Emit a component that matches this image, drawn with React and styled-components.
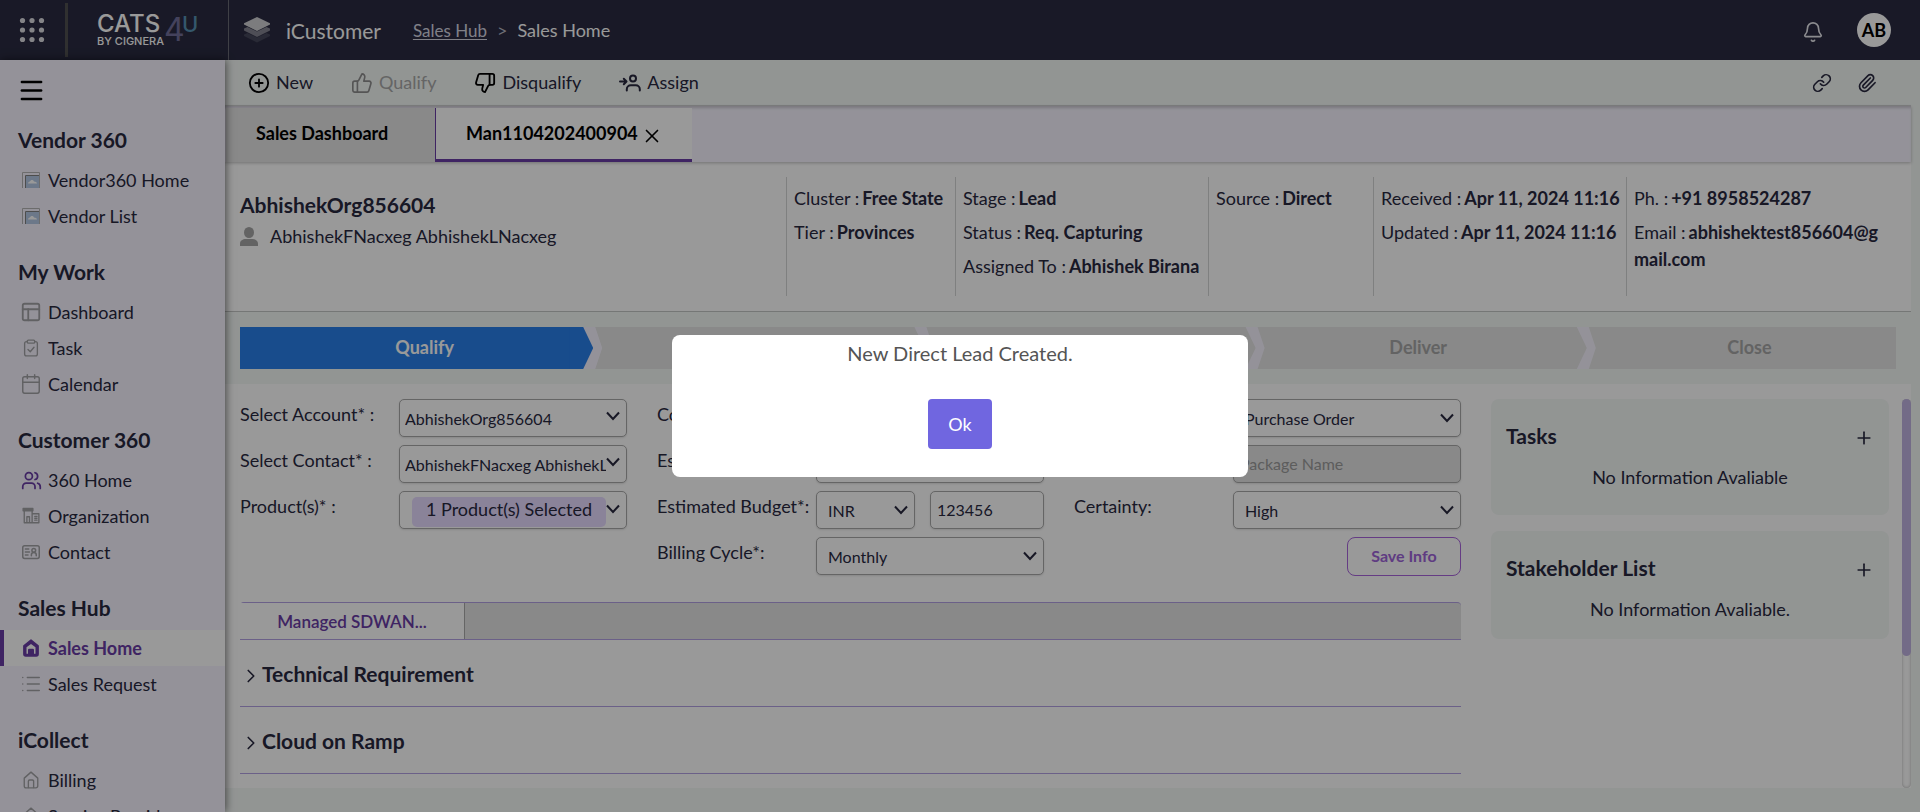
import React from "react";
import styled, { createGlobalStyle, css } from "styled-components";
import {
  Bell,
  Calendar,
  ChevronRight,
  CirclePlus,
  Link as LinkIcon,
  List,
  Menu,
  Paperclip,
  PanelsTopLeft,
  Plus,
  ThumbsDown,
  ThumbsUp,
  Users,
  X,
} from "lucide-react";

const color = {
  navy: "#2a2b41",
  ink: "#28283f",
  lilac: "#f7f4ff",
  mint: "#f4f8f6",
  grey: "#e4e4e4",
  greyText: "#a8a8a8",
  line: "#d4d6d6",
  field: "#a9a9a9",
  purple: "#693ca5",
  violetLine: "#b3a0e3",
  blue: "#287fe9",
};

const GlobalStyle = createGlobalStyle`
  *, *::before, *::after { box-sizing: border-box; }
  body {
    margin: 0;
    font-family: Lato, "Noto Sans", sans-serif;
    font-size: 18px;
    line-height: 27px;
    color: ${color.ink};
    background: ${color.mint};
  }
  button, input, select { font: inherit; color: inherit; }
  h2, h3, p, ul { margin: 0; padding: 0; }
  ul { list-style: none; }
`;

const Page = styled.div`
  display: flex;
  flex-direction: column;
  height: 100vh;
  overflow: hidden;
`;

const PlainButton = styled.button`
  display: inline-flex;
  align-items: center;
  border: 0;
  padding: 0;
  background: none;
  cursor: pointer;
`;

/* Top bar */

const TopBar = styled.header`
  display: flex;
  align-items: center;
  flex: none;
  height: 60px;
  color: #fff;
  background: ${color.navy};
`;

const AppsCell = styled.div`
  display: flex;
  align-items: center;
  width: 68px;
  height: 54px;
  padding-left: 18px;
  border-right: 3px solid #505050;
`;

const Brand = styled.a`
  display: flex;
  align-items: center;
  width: 161px;
  height: 60px;
  padding-left: 29px;
  border-right: 1px solid #6a6b76;
  color: #fff;
  text-decoration: none;
  font-family: Inter, "Liberation Sans", sans-serif;
`;

const BrandArt = styled.svg`
  display: block;
  fill: #fff;
`;

const AppTitle = styled.div`
  display: flex;
  align-items: center;
  gap: 15px;
  padding-left: 14px;
  font-size: 21px;
`;

const Crumbs = styled.nav`
  display: flex;
  gap: 10px;
  padding-left: 32px;

  a { font-size: 17px; color: #d6d6e2; text-underline-offset: 2px; }
`;

const CrumbMark = styled.span`
  color: #b8b8c4;
`;

const TopActions = styled.div`
  display: flex;
  align-items: center;
  gap: 33px;
  margin-left: auto;
  padding-right: 29px;
`;

const BellButton = styled(PlainButton)`
  padding-top: 4px;
`;

const Avatar = styled(PlainButton)`
  justify-content: center;
  width: 34px;
  height: 34px;
  border-radius: 50%;
  font-weight: 700;
  color: #000;
  background: #fff;
`;

/* Side navigation */

const Shell = styled.div`
  display: flex;
  flex: 1;
  min-height: 0;
`;

const Sidebar = styled.nav`
  flex: none;
  position: relative;
  z-index: 2;
  width: 225px;
  overflow: hidden;
  background: ${color.lilac};
  box-shadow: 1px 0 8px rgba(0, 0, 0, 0.55);
`;

const MenuButton = styled(PlainButton)`
  height: 58px;
  padding: 2px 17px 0;
  color: #000;
`;

const NavGroup = styled.section`
  margin-bottom: 16px;
`;

const NavHeading = styled.h2`
  padding-left: 18px;
  font-size: 21px;
  line-height: 44px;
  font-weight: 700;
`;

const NavLink = styled.a`
  display: flex;
  align-items: center;
  gap: 8px;
  height: 36px;
  padding-left: 22px;
  color: inherit;
  text-decoration: none;
  white-space: nowrap;

  ${({ $active }) => $active && css`
    padding-left: 18px;
    border-left: 4px solid ${color.purple};
    font-weight: 700;
    color: ${color.purple};
    background: #fff;
  `}
`;

const IconSlot = styled.span`
  display: flex;
  align-items: center;
  justify-content: center;
  flex: none;
  width: 18px;
  color: ${({ $tint }) => ($tint ? color.purple : "#a2a2a6")};

  svg { flex: none; }
`;

/* Main column */

const Main = styled.main`
  display: flex;
  flex: 1;
  flex-direction: column;
  min-width: 0;
  padding-right: 9px;
`;

const Toolbar = styled.div`
  display: flex;
  align-items: center;
  flex: none;
  gap: 38px;
  height: 46px;
  padding: 0 34px 0 23px;
  border-bottom: 1px solid ${color.line};
`;

const ToolButton = styled(PlainButton)`
  gap: 6px;
  ${({ disabled }) => disabled && css`color: ${color.greyText};`}
  svg { color: ${({ $iconColor }) => $iconColor || "#000"}; }
`;

const ToolLinks = styled.div`
  display: flex;
  gap: 25px;
  margin-left: auto;
`;

const TabBar = styled.div`
  position: relative;
  display: flex;
  flex: none;
  height: 56px;
  padding: 2px 0 0 1px;
  background: ${color.lilac};
  box-shadow: inset 0 3px 3px -1px rgba(0, 0, 0, 0.18), 0 1px 3px rgba(0, 0, 0, 0.25);
`;

const Tab = styled(PlainButton)`
  gap: 3px;
  min-width: 209px;
  padding: 0 30px 3px;
  font-weight: 700;
  color: #000;
  background: ${color.grey};

  svg { margin: 5px -3px 0 0; }

  ${({ $active }) => $active && css`
    min-width: 257px;
    padding-bottom: 0;
    border-left: 1px solid ${color.purple};
    border-bottom: 3px solid ${color.purple};
    background: #fff;
  `}
`;

const Summary = styled.section`
  display: grid;
  flex: none;
  grid-template-columns: 561fr 169fr 253fr 165fr 253fr 285fr;
  padding: 15px 0;
  height: 150px;
  border-bottom: 1px solid #c4c6c5;
  background: #fff;
`;

const Identity = styled.div`
  padding: 13px 15px;
`;

const OrgName = styled.h2`
  font-size: 21px;
  line-height: 30px;
  font-weight: 700;
`;

const Person = styled.p`
  display: flex;
  align-items: center;
  gap: 12px;
  line-height: 33px;
`;

const Facts = styled.ul`
  display: flex;
  flex-direction: column;
  gap: 7px;
  min-width: 0;
  padding: 8px ${({ $wide }) => ($wide ? "24px" : "0")} 0 7px;
  border-left: 1px solid ${color.line};
  white-space: ${({ $wide }) => ($wide ? "normal" : "nowrap")};
  word-break: ${({ $wide }) => ($wide ? "break-all" : "normal")};

  b { margin-left: 3px; font-weight: 700; }
`;

const StageBar = styled.ol`
  display: flex;
  flex: none;
  margin: 0;
  padding: 15px 15px;
  list-style: none;
`;

const Stage = styled.li`
  position: relative;
  z-index: ${({ $order }) => 10 - $order};
  flex: 1;
  height: 42px;
  padding-left: 38px;
  line-height: 40px;
  text-align: center;
  font-weight: 700;
  color: ${({ $current }) => ($current ? "#fff" : "#a6a6a6")};
  background: ${({ $current }) => ($current ? color.blue : color.grey)};

  &:not(:last-child)::before,
  &:not(:last-child)::after {
    content: "";
    position: absolute;
    top: 0;
    bottom: 0;
    left: calc(100% - 2px);
  }
  &::before {
    width: 33px;
    background: ${color.lilac};
    clip-path: polygon(8px 0, 26px 0, 100% 50%, 26px 100%, 8px 100%);
  }
  &::after {
    width: 24px;
    background: inherit;
    clip-path: polygon(0 0, 14px 0, 100% 50%, 14px 100%, 0 100%);
  }
`;

const Body = styled.div`
  display: flex;
  flex: 1;
  min-height: 0;
  margin-bottom: 24px;
  padding: 15px 0 0 15px;
  background: #fff;
`;

const Details = styled.div`
  flex: 1221;
  min-width: 0;
`;

const Aside = styled.aside`
  display: flex;
  flex: 398;
  flex-direction: column;
  gap: 16px;
  min-width: 0;
  margin: 0 13px 0 30px;
`;

const ScrollTrack = styled.div`
  width: 9px;
  flex: none;
  border-radius: 5px;
  box-shadow: inset 0 0 3px rgba(0, 0, 0, 0.3);
`;

const ScrollThumb = styled.div`
  height: 66%;
  border-radius: 5px;
  background: #c0b3e1;
`;

/* Form */

const Form = styled.form`
  display: grid;
  grid-template-columns: repeat(3, 1fr);
  gap: 30px;
  margin-bottom: 26px;
`;

const FormColumn = styled.div`
  display: flex;
  flex-direction: column;
  gap: 8px;
`;

const Field = styled.div`
  display: grid;
  grid-template-columns: 159fr 228fr;
  height: 38px;

  label { line-height: 30px; white-space: nowrap; }
`;

const Pair = styled.div`
  display: grid;
  grid-template-columns: 99fr 114fr;
  gap: 15px;
`;

const boxed = css`
  width: 100%;
  min-width: 0;
  height: 38px;
  border: 1px solid ${color.field};
  border-radius: 5px;
  background: #fff;
  font-size: 16px;
  box-shadow: 0 1px 2px rgba(0, 0, 0, 0.12);
`;

const SelectBox = styled.div`
  position: relative;
  min-width: 0;

  select {
    ${boxed}
    appearance: none;
    padding: 0 20px 0 ${({ $tight }) => ($tight ? "5px" : "11px")};
  }
  svg {
    position: absolute;
    top: ${({ $tight }) => ($tight ? "12px" : "14px")};
    right: 7px;
    pointer-events: none;
  }
`;

const TextBox = styled.input`
  ${boxed}
  padding: 0 6px 2px;
  &:disabled { background: ${color.grey}; }
  &::placeholder { color: #9b9b9b; }
`;

const ProductPicker = styled.button`
  ${boxed}
  position: relative;
  padding: 5px 20px 3px 12px;
  cursor: pointer;

  svg {
    position: absolute;
    top: 12px;
    right: 6px;
  }
`;

const Chip = styled.span`
  display: block;
  height: 30px;
  border-radius: 5px;
  font-size: 18px;
  line-height: 25px;
  white-space: nowrap;
  background: #e6daff;
`;

const SaveButton = styled.button`
  align-self: flex-end;
  width: 114px;
  height: 39px;
  padding: 0 0 3px;
  border: 1px solid #a864dc;
  border-radius: 8px;
  font-size: 16px;
  font-weight: 700;
  color: #9e64d9;
  background: #fff;
  cursor: pointer;
`;

const ProductTabs = styled.div`
  display: flex;
  height: 38px;
  border: solid ${color.violetLine};
  border-width: 1px 0;
  border-radius: 4px 4px 0 0;
  background: ${color.grey};
`;

const ProductTab = styled(PlainButton)`
  justify-content: center;
  width: 225px;
  border-right: 1px solid ${color.field};
  font-size: 17px;
  font-weight: 600;
  color: ${color.purple};
  background: #fff;
`;

const Accordion = styled(PlainButton)`
  display: flex;
  width: 100%;
  height: 67px;
  border-bottom: 1px solid ${color.violetLine};
  font-size: 21px;
  font-weight: 700;
  svg { margin-top: 6px; }
`;

/* Side cards */

const Card = styled.section`
  padding: 21px 15px ${({ $short }) => ($short ? "16px" : "24px")};
  border-radius: 8px;
  background: ${color.mint};
  text-align: center;
`;

const CardHead = styled.div`
  display: flex;
  align-items: center;
  justify-content: space-between;
  height: 30px;
  margin-bottom: 14px;

  h3 { font-size: 21px; font-weight: 700; }
  button { padding-top: 6px; }
`;

/* Dialog */

const Overlay = styled.div`
  position: fixed;
  inset: 0;
  z-index: 20;
  display: flex;
  align-items: center;
  justify-content: center;
  background: rgba(0, 0, 0, 0.4);
`;

const Dialog = styled.div`
  display: flex;
  flex-direction: column;
  align-items: center;
  width: 30%;
  padding: 3px 0 28px;
  border-radius: 8px;
  font-size: 20px;
  line-height: 30px;
  color: #545454;
  background: #fff;
`;

const OkButton = styled.button`
  width: 64px;
  height: 50px;
  margin-top: 31px;
  border: 0;
  border-radius: 4px;
  font-size: 18px;
  color: #fff;
  background: #7066e0;
  cursor: pointer;
`;

/* Icons */

const Stroke = ({ size = 18, width = 2, children }) => (
  <svg width={size} height={size} viewBox="0 0 24 24" fill="none" stroke="currentColor"
    strokeWidth={width} strokeLinecap="round" strokeLinejoin="round" aria-hidden="true">
    {children}
  </svg>
);

const DropMark = () => (
  <svg width="14" height="10" viewBox="0 0 14 10" fill="none" stroke={color.ink} strokeWidth="2" aria-hidden="true">
    <path d="M1 1.500 7 8l6-6.500" />
  </svg>
);

const DotsIcon = () => (
  <svg width="28" height="28" viewBox="0 0 28 28" fill="#dcdce2" aria-hidden="true">
    {[4.5, 14, 23.5].map((cy) => [4.5, 14, 23.5].map((cx) => <circle key={cx + "-" + cy} cx={cx} cy={cy} r="2.6" />))}
  </svg>
);

const StackIcon = () => (
  <svg width="28" height="28" viewBox="0 0 28 28" aria-hidden="true">
    <path d="M1 18.500 4.500 17 14 21.500 23.500 17 27 18.500V20L14 26.500 1 20Z" fill="#45465a" />
    <path d="M1 12.500 4.500 11 14 15.500 23.500 11 27 12.500V14.500L14 21 1 14.500Z" fill="#83838f" />
    <path d="M14 1 27 7.200V8.500L14 15 1 8.500V7.200Z" fill="#cfcfd2" />
  </svg>
);

const ImageIcon = () => (
  <svg width="18" height="16" viewBox="0 0 18 16" aria-hidden="true">
    <path d="M.5 16V.5h17V16" fill="none" stroke="#b4b4b4" />
    <path d="M4 16V4h13v12Z" fill="#b4c8e4" />
    <path d="M3.500 16V3.500H17" fill="none" stroke="#808080" />
    <path d="M6 11.500c0-1.500 1.500-2 2-2 .5-2 3.500-2 4 0 2 0 3 1 3 2Z" fill="#fff" />
  </svg>
);

const TaskIcon = () => (
  <Stroke width={1.8}>
    <path d="M7 3.500H6a2.500 2.500 0 0 0-2.500 2.500v14A2.500 2.500 0 0 0 6 22.500h12a2.500 2.500 0 0 0 2.500-2.500V6A2.500 2.500 0 0 0 18 3.500h-1" />
    <rect x="7" y="1.500" width="10" height="4" rx="1.500" />
    <path d="m8 14 3 3 5-6" />
  </Stroke>
);

const OrgIcon = () => (
  <Stroke width={1.8}>
    <path d="M1.500 2h13v3h-13Z" fill="currentColor" />
    <path d="M3 5v16h19.500V9H14M13.500 5v16M6.500 21v-8h3.500v8M17 12.500h3M17 15h3M17 17.500h3" />
  </Stroke>
);

const ContactIcon = () => (
  <Stroke width={2}>
    <rect x="1" y="3.500" width="22" height="17" rx="2.500" />
    <path d="M4.500 8H9M4.500 12H10M4.500 16H8M12.500 17v-1.500c0-4 6.500-4 6.500 0V17" />
    <circle cx="15.700" cy="9.700" r="2.500" />
  </Stroke>
);

const HouseIcon = () => (
  <Stroke width={1.8}>
    <path d="M3 9.500 12 1.500l9 8V20a2.500 2.500 0 0 1-2.500 2.500h-13A2.500 2.500 0 0 1 3 20Z" />
    <path d="M8.500 22V13.500a1.500 1.500 0 0 1 1.500-1.500h4a1.500 1.500 0 0 1 1.500 1.500V22" />
  </Stroke>
);

const ActiveHouseIcon = () => (
  <Stroke width={2}>
    <path d="M2.500 9 12 1.500 21.500 9V20a2.500 2.500 0 0 1-2.500 2.500H5A2.500 2.500 0 0 1 2.500 20Z" fill="currentColor" />
    <path d="M6 19.500V11l6-4.500 6 4.500v8.500h-2V14.500a1.500 1.500 0 0 0-1.500-1.500h-5A1.500 1.500 0 0 0 8 14.500v5Z" fill="#fff" stroke="none" />
    <path d="M12 16v4" />
  </Stroke>
);

const AssignIcon = () => (
  <svg width="22" height="18" viewBox="0 0 22 18" fill="none" stroke="currentColor" strokeWidth="2"
    strokeLinecap="round" strokeLinejoin="round" aria-hidden="true">
    <path d="M1 7.500h6M4.800 4.800 7.500 7.500 4.800 10.200" />
    <circle cx="14" cy="4.500" r="3" />
    <path d="M7.800 16.500v-1.200a4 4 0 0 1 4-4h5a4 4 0 0 1 4 4v1.200" />
  </svg>
);

const PersonIcon = () => (
  <svg width="18" height="20" viewBox="0 0 18 20" fill="#a6a6a6" aria-hidden="true">
    <ellipse cx="9" cy="5.500" rx="5" ry="5.500" />
    <path d="M0 19v-2.500C0 13.500 3 12 5.500 12h7c2.500 0 5.500 1.500 5.500 4.500V19Z" />
  </svg>
);

const BrandLogo = () => (
  <BrandArt width="116" height="60" viewBox="0 0 116 60" role="img" aria-label="CATS4U by Cignera">
    <text x="0" y="32" fontSize="24" fontWeight="500">CATS</text>
    <text x="67" y="41" fontSize="32" fontWeight="400" fill="#726f99">4</text>
    <text x="85" y="32" fontSize="22" fontWeight="500" fill="#5891b5">U</text>
    <text x="0" y="45" fontSize="11" fontWeight="500">BY CIGNERA</text>
  </BrandArt>
);

/* Data */

const navGroups = [
  { title: "Vendor 360", items: [
    { label: "Vendor360 Home", icon: <ImageIcon /> },
    { label: "Vendor List", icon: <ImageIcon /> },
  ] },
  { title: "My Work", items: [
    { label: "Dashboard", icon: <PanelsTopLeft size={22} strokeWidth={2} /> },
    { label: "Task", icon: <TaskIcon /> },
    { label: "Calendar", icon: <Calendar size={22} strokeWidth={1.6} /> },
  ] },
  { title: "Customer 360", items: [
    { label: "360 Home", icon: <Users size={21} strokeWidth={2} />, tint: true },
    { label: "Organization", icon: <OrgIcon /> },
    { label: "Contact", icon: <ContactIcon /> },
  ] },
  { title: "Sales Hub", items: [
    { label: "Sales Home", icon: <ActiveHouseIcon />, active: true, tint: true },
    { label: "Sales Request", icon: <List size={22} strokeWidth={1.6} /> },
  ] },
  { title: "iCollect", items: [
    { label: "Billing", icon: <HouseIcon /> },
    { label: "Service Provider", icon: <HouseIcon /> },
  ] },
];

const factColumns = [
  [["Cluster", "Free State"], ["Tier", "Provinces"]],
  [["Stage", "Lead"], ["Status", "Req. Capturing"], ["Assigned To", "Abhishek Birana"]],
  [["Source", "Direct"]],
  [["Received", "Apr 11, 2024 11:16"], ["Updated", "Apr 11, 2024 11:16"]],
  [["Ph.", "+91 8958524287"], ["Email", "abhishektest856604@gmail.com"]],
];

const stages = ["Qualify", "Propose", "Negotiate", "Deliver", "Close"];

const Dropdown = ({ id, value, tight, label }) => (
  <SelectBox $tight={tight}>
    <select id={id} aria-label={label} defaultValue={value}>
      <option>{value}</option>
    </select>
    <DropMark />
  </SelectBox>
);

export default function App() {
  return (
    <Page>
      <GlobalStyle />
      <TopBar>
        <AppsCell>
          <PlainButton type="button" aria-label="Apps"><DotsIcon /></PlainButton>
        </AppsCell>
        <Brand href="#"><BrandLogo /></Brand>
        <AppTitle><StackIcon />iCustomer</AppTitle>
        <Crumbs aria-label="Breadcrumb">
          <a href="#">Sales Hub</a>
          <CrumbMark>&gt;</CrumbMark>
          <span>Sales Home</span>
        </Crumbs>
        <TopActions>
          <BellButton type="button" aria-label="Notifications"><Bell size={22} color="#e8e8ee" strokeWidth={1.8} /></BellButton>
          <Avatar type="button">AB</Avatar>
        </TopActions>
      </TopBar>

      <Shell>
        <Sidebar aria-label="Main">
          <MenuButton type="button" aria-label="Toggle menu"><Menu size={29} strokeWidth={2} /></MenuButton>
          {navGroups.map((group) => (
            <NavGroup key={group.title}>
              <NavHeading>{group.title}</NavHeading>
              {group.items.map((item) => (
                <NavLink key={item.label} href="#" $active={item.active}>
                  <IconSlot $tint={item.tint}>{item.icon}</IconSlot>
                  {item.label}
                </NavLink>
              ))}
            </NavGroup>
          ))}
        </Sidebar>

        <Main>
          <Toolbar>
            <ToolButton type="button"><CirclePlus size={22} strokeWidth={2} />New</ToolButton>
            <ToolButton type="button" disabled $iconColor="#8e8e8e"><ThumbsUp size={22} strokeWidth={1.8} />Qualify</ToolButton>
            <ToolButton type="button"><ThumbsDown size={22} strokeWidth={2} />Disqualify</ToolButton>
            <ToolButton type="button" $iconColor={color.ink}><AssignIcon />Assign</ToolButton>
            <ToolLinks>
              <PlainButton type="button" aria-label="Links"><LinkIcon size={20} /></PlainButton>
              <PlainButton type="button" aria-label="Attachments"><Paperclip size={20} /></PlainButton>
            </ToolLinks>
          </Toolbar>

          <TabBar>
            <Tab type="button">Sales Dashboard</Tab>
            <Tab type="button" $active>Man1104202400904<X size={22} strokeWidth={1.8} /></Tab>
          </TabBar>

          <Summary>
            <Identity>
              <OrgName>AbhishekOrg856604</OrgName>
              <Person><PersonIcon />AbhishekFNacxeg AbhishekLNacxeg</Person>
            </Identity>
            {factColumns.map((facts, i) => (
              <Facts key={facts[0][0]} $wide={i === factColumns.length - 1}>
                {facts.map(([name, value]) => (
                  <li key={name}>{name} :<b>{value}</b></li>
                ))}
              </Facts>
            ))}
          </Summary>

          <StageBar>
            {stages.map((stage, i) => (
              <Stage key={stage} $order={i} $current={i === 0}>{stage}</Stage>
            ))}
          </StageBar>

          <Body>
            <Details>
              <Form>
                <FormColumn>
                  <Field><label htmlFor="account">Select Account* :</label><Dropdown id="account" value="AbhishekOrg856604" tight /></Field>
                  <Field><label htmlFor="contact">Select Contact* :</label><Dropdown id="contact" value="AbhishekFNacxeg AbhishekLNacxeg" tight /></Field>
                  <Field>
                    <label htmlFor="products">Product(s)* :</label>
                    <ProductPicker id="products" type="button"><Chip>1 Product(s) Selected</Chip><DropMark /></ProductPicker>
                  </Field>
                </FormColumn>
                <FormColumn>
                  <Field><label htmlFor="term">Contract Term*:</label><TextBox id="term" /></Field>
                  <Field><label htmlFor="closure">Est. Closure*:</label><TextBox id="closure" /></Field>
                  <Field>
                    <label htmlFor="budget">Estimated Budget*:</label>
                    <Pair><Dropdown value="INR" label="Currency" /><TextBox id="budget" defaultValue="123456" /></Pair>
                  </Field>
                  <Field><label htmlFor="cycle">Billing Cycle*:</label><Dropdown id="cycle" value="Monthly" /></Field>
                </FormColumn>
                <FormColumn>
                  <Field><label htmlFor="order">Order Type:</label><Dropdown id="order" value="Purchase Order" /></Field>
                  <Field><label htmlFor="package">Package:</label><TextBox id="package" disabled placeholder="Package Name" /></Field>
                  <Field><label htmlFor="certainty">Certainty:</label><Dropdown id="certainty" value="High" /></Field>
                  <SaveButton type="button">Save Info</SaveButton>
                </FormColumn>
              </Form>
              <ProductTabs><ProductTab type="button">Managed SDWAN...</ProductTab></ProductTabs>
              <Accordion type="button"><ChevronRight size={22} strokeWidth={1.8} />Technical Requirement</Accordion>
              <Accordion type="button"><ChevronRight size={22} strokeWidth={1.8} />Cloud on Ramp</Accordion>
            </Details>
            <Aside>
              <Card>
                <CardHead><h3>Tasks</h3><PlainButton type="button" aria-label="Add task"><Plus size={20} /></PlainButton></CardHead>
                <p>No Information Avaliable</p>
              </Card>
              <Card $short>
                <CardHead><h3>Stakeholder List</h3><PlainButton type="button" aria-label="Add stakeholder"><Plus size={20} /></PlainButton></CardHead>
                <p>No Information Avaliable.</p>
              </Card>
            </Aside>
            <ScrollTrack><ScrollThumb /></ScrollTrack>
          </Body>
        </Main>
      </Shell>

      <Overlay>
        <Dialog role="dialog" aria-modal="true" aria-labelledby="dialog-text">
          <p id="dialog-text">New Direct Lead Created.</p>
          <OkButton type="button">Ok</OkButton>
        </Dialog>
      </Overlay>
    </Page>
  );
}
